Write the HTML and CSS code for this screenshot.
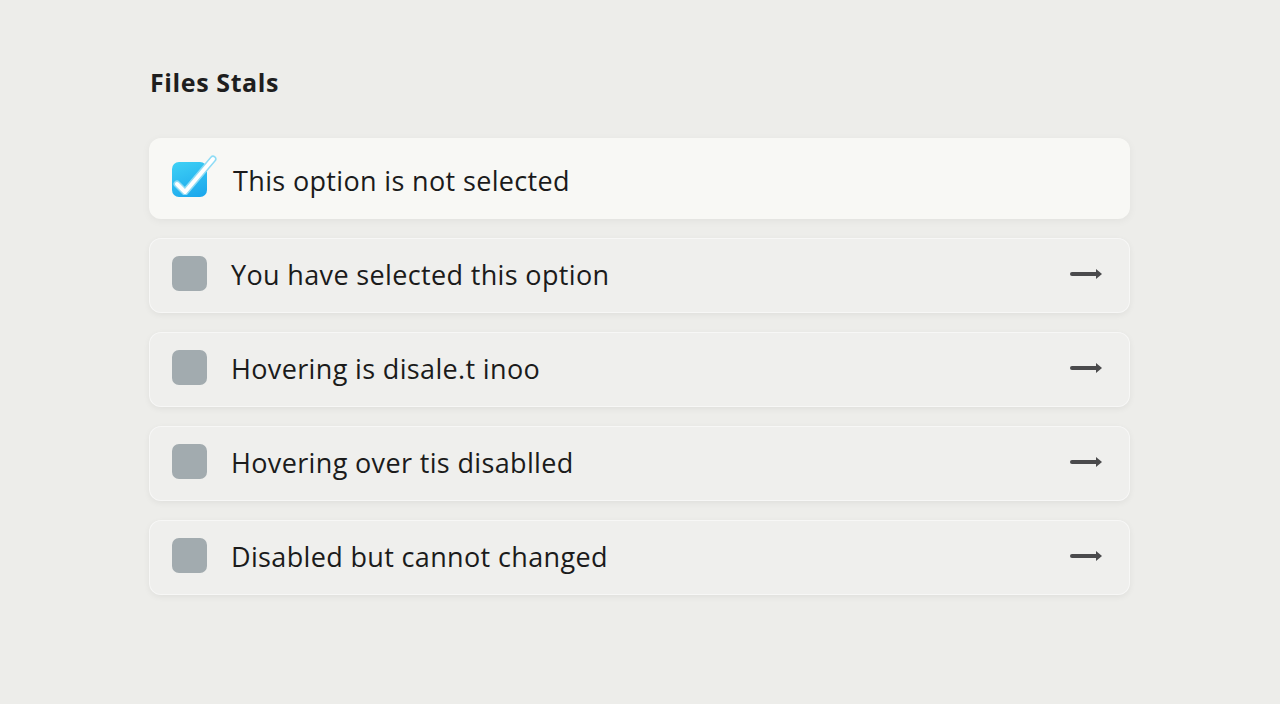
FILE: index.html
```html
<!DOCTYPE html>
<html lang="en">
<head>
<meta charset="utf-8">
<title>Files Stals</title>
<link rel="stylesheet" href="styles.css">
</head>
<body>
<main class="panel">
  <h1 class="title">Files Stals</h1>
  <ul class="options">
    <li class="option option--selected">
      <span class="check check--on">
        <svg class="check-mark" width="48" height="44" viewBox="0 0 48 44">
          <path d="M7 33 L15 41 L43 8" fill="none" stroke="#8fdcf5" stroke-width="7" stroke-linecap="round" stroke-linejoin="round"/>
          <path d="M7 33 L15 41 L43 8" fill="none" stroke="#ffffff" stroke-width="4" stroke-linecap="round" stroke-linejoin="round"/>
        </svg>
      </span>
      <span class="label">This option is not selected</span>
    </li>
    <li class="option">
      <span class="check"></span>
      <span class="label">You have selected this option</span>
      <span class="arrow"></span>
    </li>
    <li class="option">
      <span class="check"></span>
      <span class="label">Hovering is disale.t inoo</span>
      <span class="arrow"></span>
    </li>
    <li class="option">
      <span class="check"></span>
      <span class="label">Hovering over tis disablled</span>
      <span class="arrow"></span>
    </li>
    <li class="option">
      <span class="check"></span>
      <span class="label">Disabled but cannot changed</span>
      <span class="arrow"></span>
    </li>
  </ul>
</main>
</body>
</html>
```
FILE: styles.css
```css
html, body {
  margin: 0;
  padding: 0;
}
body {
  background: #ededea;
  font-family: "Open Sans", "Noto Sans", sans-serif;
  color: #1c1c1c;
  width: 1280px;
  height: 704px;
  overflow: hidden;
}
.panel {
  width: 981px;
  padding: 66px 0 0 149px;
}
.title {
  margin: 0 0 0 1px;
  font-size: 25px;
  font-weight: 700;
  line-height: 32px;
  color: #1e1e1e;
  letter-spacing: 0.6px;
}
.options {
  list-style: none;
  margin: 40px 0 0;
  padding: 0;
  display: flex;
  flex-direction: column;
  gap: 19px;
}
.option {
  display: flex;
  align-items: center;
  height: 75px;
  padding: 0 31px 0 23px;
  border-radius: 12px;
  background: #efefed;
  box-shadow: 0 2px 6px rgba(0, 0, 0, 0.06), 0 0 0 1px rgba(255, 255, 255, 0.5) inset;
}
.option--selected {
  height: 81px;
  background: #f8f8f5;
  box-shadow: 0 2px 8px rgba(0, 0, 0, 0.05);
}
.check {
  flex: none;
  width: 35px;
  height: 35px;
  border-radius: 7px;
  background: #a2abaf;
  position: relative;
  margin-bottom: 5px;
}
.check--on {
  background: linear-gradient(160deg, #3fd1f5 0%, #1aa5ec 100%);
  margin-bottom: 0;
  margin-top: 2px;
}
.check-mark {
  position: absolute;
  left: -2px;
  top: -11px;
}
.label {
  flex: 1;
  margin-left: 24px;
  font-size: 27px;
  line-height: 34px;
  color: #1b1b1b;
  letter-spacing: 0.35px;
  margin-bottom: 2px;
}
.option--selected .label {
  margin-left: 26px;
  margin-bottom: 0;
  margin-top: 4px;
}
.arrow {
  flex: none;
  position: relative;
  width: 29px;
  height: 4px;
  background: #4a4a4c;
  border-radius: 2px 0 0 2px;
  margin-bottom: 3px;
}
.arrow::after {
  content: "";
  position: absolute;
  right: -3px;
  top: -3px;
  border-left: 6px solid #4a4a4c;
  border-top: 5px solid transparent;
  border-bottom: 5px solid transparent;
}
```
